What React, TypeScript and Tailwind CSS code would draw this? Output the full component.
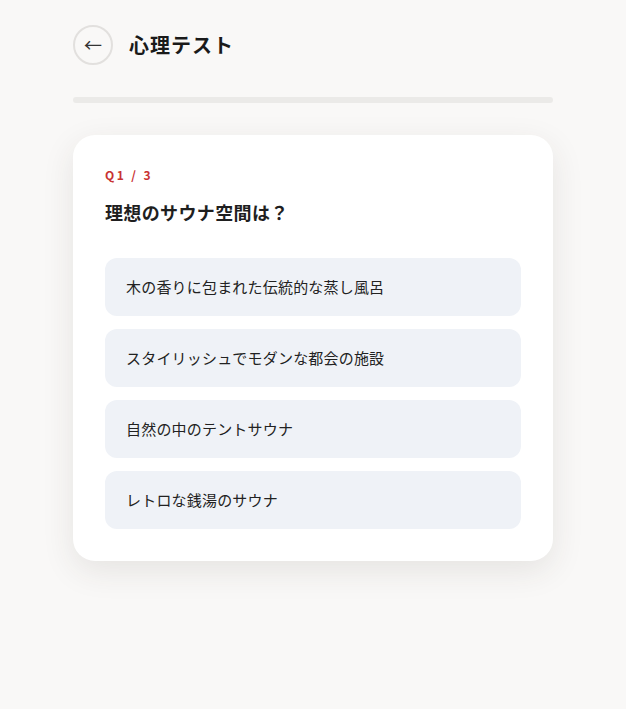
const options = [
  "木の香りに包まれた伝統的な蒸し風呂",
  "スタイリッシュでモダンな都会の施設",
  "自然の中のテントサウナ",
  "レトロな銭湯のサウナ",
];

export default function App() {
  return (
    <div
      className="min-h-[709px] bg-[#f9f8f7] text-[#1f1f1f]"
      style={{ fontFamily: '"Noto Sans CJK JP", "Noto Sans", sans-serif' }}
    >
      <div className="max-w-[480px] mx-auto pt-[25px]">
        {/* Header */}
        <div className="flex items-center gap-4">
          <button className="w-10 h-10 rounded-full border-2 border-[#e2e0de] bg-transparent flex items-center justify-center text-[18px] leading-none text-[#333] pb-[2px]">
            ←
          </button>
          <h1 className="text-[20px] font-bold tracking-wider text-[#1a1a1a]">心理テスト</h1>
        </div>

        {/* Progress */}
        <div className="mt-8 h-[6px] rounded-full bg-[#ebeae8]" />

        {/* Card */}
        <div className="mt-8 bg-white rounded-[22px] px-8 pt-8 pb-8 shadow-[0_10px_32px_rgba(60,50,40,0.10)]">
          <p className="text-[12px] leading-4 font-bold tracking-[0.2em] text-[#c83232]">Q1 / 3</p>
          <h2 className="mt-4 text-[18px] leading-[27px] font-bold tracking-[0.02em] text-[#1f1f1f]">
            理想のサウナ空間は？
          </h2>
          <div className="mt-8 flex flex-col gap-[13px]">
            {options.map((o) => (
              <button
                key={o}
                className="h-[58px] w-full rounded-xl bg-[#eff2f7] pl-[21px] text-left text-[15px] tracking-[0.013em] text-[#222]"
              >
                {o}
              </button>
            ))}
          </div>
        </div>
      </div>
    </div>
  );
}
